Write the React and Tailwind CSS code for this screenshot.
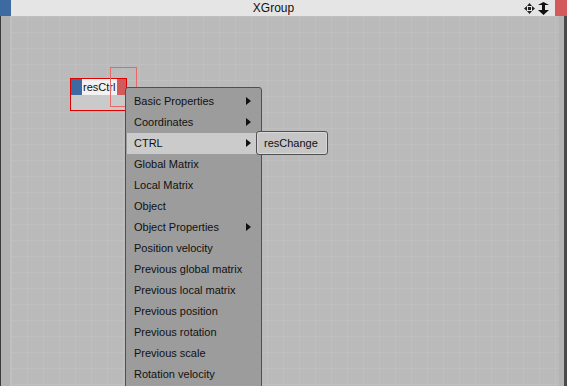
const items = [
  { label: "Basic Properties", sub: true },
  { label: "Coordinates", sub: true },
  { label: "CTRL", sub: true, active: true },
  { label: "Global Matrix" },
  { label: "Local Matrix" },
  { label: "Object" },
  { label: "Object Properties", sub: true },
  { label: "Position velocity" },
  { label: "Previous global matrix" },
  { label: "Previous local matrix" },
  { label: "Previous position" },
  { label: "Previous rotation" },
  { label: "Previous scale" },
  { label: "Rotation velocity" },
];

const Arrow = () => (
  <svg width="5" height="8" viewBox="0 0 5 8" className="absolute right-[9px] top-[6px]">
    <path d="M0 0 L5 4 L0 8 Z" fill="#111" />
  </svg>
);

export default function App() {
  return (
    <div className="w-[567px] h-[386px] overflow-hidden flex flex-col bg-[#bababa] text-[11px] text-[#111] font-['Liberation_Sans',Arial,sans-serif]">
      {/* title bar */}
      <div className="h-[16px] flex shrink-0 bg-[#e5e5e5]">
        <div className="w-[11px] bg-[#3d6aa0]" />
        <div className="flex-1 flex items-center justify-center pl-[12px] text-[12px] text-[#111]">XGroup</div>
        <div className="flex items-center gap-[3px] pr-[6px]">
          <svg width="11" height="11" viewBox="0 0 11 11">
            <path d="M5.5 0 L8 3 L3 3 Z M5.5 11 L8 8 L3 8 Z M0 5.5 L3 3 L3 8 Z M11 5.5 L8 3 L8 8 Z" fill="#222" />
            <rect x="4" y="4" width="3" height="3" fill="#222" />
          </svg>
          <svg width="11" height="13" viewBox="0 0 11 13">
            <path d="M0 3 L5.5 0 L11 3 Z M4 3 H7 V8 H4 Z M0 8 H11 L5.5 13 Z" fill="#111" />
          </svg>
        </div>
        <div className="w-[12px] bg-[#d25a5a]" />
      </div>

      {/* canvas */}
      <div className="flex-1 flex">
        <div className="w-[1px] bg-[#3c3c3c]" />
        <div className="w-[10px] bg-[#b2b2b2] border-r border-[#c2c2c2]" />
        <div className="flex-1 relative bg-[#bababa] bg-[linear-gradient(#bfbfbf_1px,transparent_1px),linear-gradient(90deg,#bfbfbf_1px,transparent_1px)] bg-[length:16px_16px]">
          {/* node */}
          <div className="absolute left-[59px] top-[62px] w-[57px] h-[33px] border border-[#e00000] flex flex-col">
            <div className="h-[16px] flex">
              <div className="w-[11px] bg-[#3d6aa0]" />
              <div className="flex-1 bg-[#f2f2f2] flex items-center pl-[1px]">resCtrl</div>
              <div className="w-[9px] bg-[#d25a5a]" />
            </div>
            <div className="flex-1 bg-[#cacaca]" />
          </div>
          <div className="absolute left-[99px] top-[51px] w-[27px] h-[40px] border border-[#e66a6a]" />

          {/* context menu */}
          <div className="absolute left-[114px] top-[71px] w-[137px] h-[320px] bg-[#9c9c9c] border border-[#505050] rounded-[3px] pt-[3px] px-[1px]">
            {items.map((it) => (
              <div
                key={it.label}
                className={`relative h-[21px] flex items-center pl-[7px] ${it.active ? "bg-[#cbcbcb]" : ""}`}
              >
                {it.label}
                {it.sub && <Arrow />}
              </div>
            ))}
          </div>

          {/* submenu */}
          <div className="absolute left-[245px] top-[115px] w-[72px] h-[24px] bg-[#c6c6c6] border border-[#505050] rounded-[3px] shadow-[inset_0_0_0_1px_#d8d8d8] flex items-center pl-[7px]">
            resChange
          </div>
        </div>
        <div className="w-[5px] bg-[#b4b4b4]" />
        <div className="w-[3px] bg-[#4a4a4a]" />
      </div>
    </div>
  );
}
